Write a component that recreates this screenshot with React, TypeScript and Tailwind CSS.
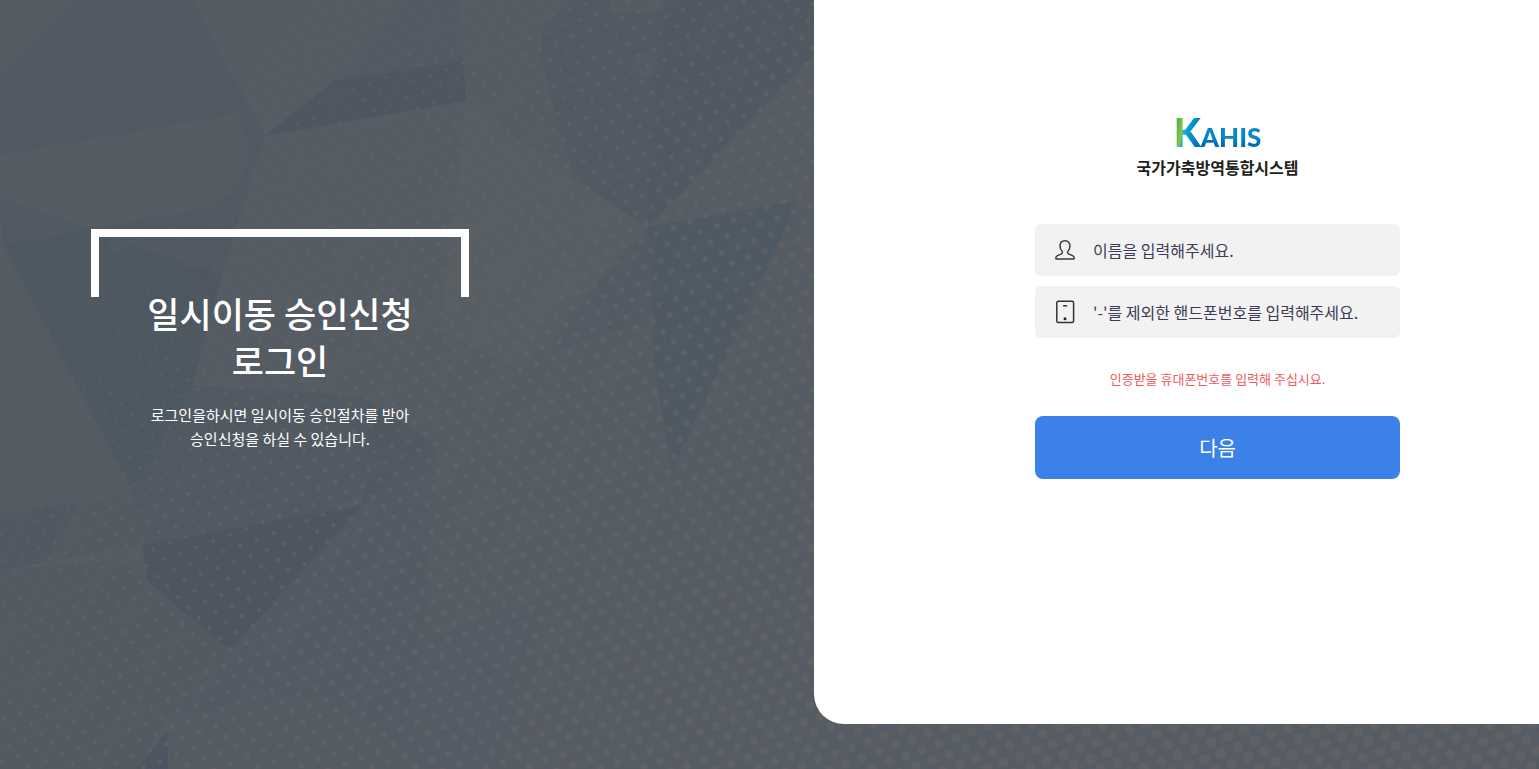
import { useState } from "react";

const facets: [string, string][] = [
  ["0,0 75,0 0,77", "#555c63"],
  ["75,0 192,0 265,136 252,175 240,113 0,155 0,77", "#515962"],
  ["192,0 405,0 265,136", "#555c63"],
  ["405,0 460,0 463,62 335,82", "#525a63"],
  ["335,80 463,61 466,101 265,136", "#4f5661"],
  ["0,155 240,113 250,165 217,207 90,229 0,198", "#545b62"],
  ["0,198 90,229 3,245", "#515962"],
  ["240,113 265,136 252,180 240,229 222,275 90,229 217,207 250,165", "#525962"],
  ["265,136 466,101 645,227 560,340 435,445 362,396 190,400 222,275", "#565c63"],
  ["466,101 645,227 595,285 520,370 440,330", "#575e64"],
  ["3,245 90,230 222,275 192,385 133,492", "#4d5861"],
  ["182,264 222,277 214,305", "#4f5661"],
  ["0,240 133,492 0,515", "#555b62"],
  ["0,515 80,502 45,562 0,571", "#515862"],
  ["80,502 133,492 143,545 45,562", "#535b62"],
  ["133,492 160,440 192,385 362,396 435,445 335,510 143,545", "#515a62"],
  ["362,396 435,445 362,505 370,470", "#505962"],
  ["0,571 120,560 158,592 168,715 140,769 0,769", "#525a62"],
  ["158,592 230,650 175,720 168,715", "#525a62"],
  ["230,650 362,505 435,445 425,620 400,745 320,695 172,722", "#525a63"],
  ["143,545 335,510 362,505 230,650 160,592 147,580", "#4e5561"],
  ["172,720 320,695 430,769 170,769", "#555b62"],
  ["167,730 168,769 138,769", "#4e5562"],
  ["422,640 540,600 500,769 430,769 400,745", "#545b64"],
  ["460,0 573,0 543,28 541,60 575,180 466,101", "#555c63"],
  ["573,0 664,0 647,227 575,180 541,60 543,28", "#515962"],
  ["610,0 690,0 664,10 614,15", "#545c64"],
  ["664,0 814,0 814,55 648,227 650,100", "#505962"],
  ["814,55 648,227 798,201 814,175", "#565d64"],
  ["648,227 595,285 555,350 650,320", "#525a63"],
  ["648,227 798,201 672,470 655,370", "#4f5963"],
];

const dots: { x: number; y: number; r: number }[] = [];
for (let j = -90; j < 120; j++) {
  for (let i = -110; i < 150; i++) {
    const x = 688 + i * 10.42 + j * 16.6;
    const y = 265.3 + i * 10.42 - j * 6.15;
    if (x < -5 || x > 1545 || y < -5 || y > 775) continue;
    if (x > 850 && y < 715) continue;
    const r = Math.min(5.4, 0.0031 * x + 0.0026 * y);
    if (r > 0.95) dots.push({ x, y, r });
  }
}

function Backdrop() {
  return (
    <svg
      aria-hidden="true"
      className="absolute inset-0 -z-10 h-full w-full"
      viewBox="0 0 1539 769"
      preserveAspectRatio="xMinYMin slice"
    >
      <rect width="1539" height="769" fill="#555c64" />
      {facets.map(([points, fill]) => (
        <polygon key={points} points={points} fill={fill} />
      ))}
      <g fill="#fff" fillOpacity="0.015">
        <circle cx="336" cy="167" r="8" />
        <circle cx="645" cy="65" r="13" />
        <circle cx="115" cy="246" r="8" />
        <circle cx="702" cy="284" r="7" />
        <circle cx="375" cy="465" r="9" />
      </g>
      <g fill="#656466" fillOpacity="0.6">
        {dots.map((d, i) => (
          <circle key={i} cx={d.x.toFixed(1)} cy={d.y.toFixed(1)} r={d.r.toFixed(2)} />
        ))}
      </g>
    </svg>
  );
}

function UserIcon() {
  return (
    <svg width="20" height="20" viewBox="0 0 20 20" fill="none" stroke="#3a3a3a" strokeWidth="1.5" strokeLinejoin="round" aria-hidden="true">
      <path d="M10 .8C6.8.8 5 3 5 6.1c0 2.300.9 4.300 2.400 5.600.3 1.200-.2 1.900-1.400 2.400l-3.600 1.500C1.200 16.100.8 17 .8 18.200c0 .6.3.9.9.9h16.600c.6 0 .9-.3.9-.9 0-1.200-.4-2.100-1.600-2.600L14 14.100c-1.200-.5-1.700-1.200-1.400-2.400C14.100 10.400 15 8.400 15 6.100 15 3 13.200.8 10 .8Z" />
    </svg>
  );
}

function PhoneIcon() {
  return (
    <svg width="20" height="24" viewBox="0 0 20 24" fill="none" stroke="#333" strokeWidth="1.5" aria-hidden="true">
      <rect x="1.800" y="1.300" width="16.800" height="21.200" rx="1.500" />
      <path d="M8 5.800h4.200" />
      <circle cx="10" cy="18.800" r="1.500" fill="#222" stroke="none" />
    </svg>
  );
}

function Brand() {
  return (
    <div className="flex flex-col items-center">
      <div className="flex items-baseline font-['Lato'] font-black leading-8">
        <span className="bg-[linear-gradient(100deg,#2fa84a_0%,#8cc63f_34%,#12b0e6_36%,#0072bc_85%)] bg-clip-text text-[39px] text-transparent">
          K
        </span>
        <span className="bg-linear-to-b from-[#0a86cc] from-50% to-[#0069b8] to-75% bg-clip-text text-[26px] text-transparent">
          AHIS
        </span>
      </div>
      <h1 className="mt-1 text-base leading-5 font-bold text-[#231f20]">국가가축방역통합시스템</h1>
    </div>
  );
}

export default function App() {
  const [name, setName] = useState("");
  const [phone, setPhone] = useState("");
  const field =
    "h-[52px] w-full rounded-md bg-[#f2f2f2] pr-4 pl-[58px] text-base font-normal text-[#3a3d55] outline-none placeholder:text-[#3a3d55] placeholder:opacity-100";

  return (
    <main className="relative isolate flex min-h-screen overflow-hidden font-['Noto_Sans_CJK_KR','Noto_Sans_KR',sans-serif]">
      <Backdrop />

      <section className="flex-1 pt-[229px] pl-[91px] text-center text-white">
        <div className="w-[378px]">
          <div className="h-[68px] border-8 border-b-0 border-white" />
          <h2 className="-mt-2 text-[35px] leading-[47px] font-medium">
            일시이동 승인신청
            <br />
            로그인
          </h2>
          <p className="mt-5 text-[15px] leading-6 font-normal">
            로그인을하시면 일시이동 승인절차를 받아
            <br />
            승인신청을 하실 수 있습니다.
          </p>
        </div>
      </section>

      <section className="mb-[45px] flex w-[47.1%] justify-center rounded-bl-[30px] bg-white pt-[116px] pb-16 pl-[82px]">
        <form className="w-[365px]" onSubmit={(e) => e.preventDefault()}>
          <Brand />
          <div className="mt-[47px] flex flex-col gap-2.5">
            <label className="relative block">
              <span className="absolute inset-y-0 left-5 flex items-center">
                <UserIcon />
              </span>
              <input
                className={field}
                type="text"
                aria-label="이름"
                placeholder="이름을 입력해주세요."
                value={name}
                onChange={(e) => setName(e.target.value)}
              />
            </label>
            <label className="relative block">
              <span className="absolute inset-y-0 left-5 flex items-center">
                <PhoneIcon />
              </span>
              <input
                className={field}
                type="tel"
                aria-label="핸드폰번호"
                placeholder="'-'를 제외한 핸드폰번호를 입력해주세요."
                value={phone}
                onChange={(e) => setPhone(e.target.value)}
              />
            </label>
          </div>
          <p className="mt-[31px] text-center text-[13px] leading-5 font-normal text-[#f25a5a]">
            인증받을 휴대폰번호를 입력해 주십시요.
          </p>
          <button
            type="submit"
            className="mt-[27px] h-[63px] w-full rounded-lg bg-[#3c81e8] text-xl font-normal text-white"
          >
            다음
          </button>
        </form>
      </section>
    </main>
  );
}
